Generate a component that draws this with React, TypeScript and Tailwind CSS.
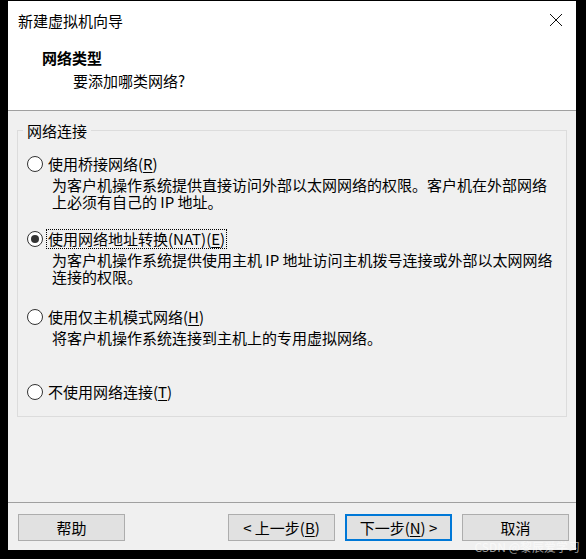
import React from 'react';

const font = "font-['Noto_Sans_CJK_SC','Noto_Sans',sans-serif]";

type Option = {
  id: string;
  label: React.ReactNode;
  desc?: string[];
  rowClass: string;
};

const U = ({ c }: { c: string }) => <span className="underline underline-offset-2">{c}</span>;

const options: Option[] = [
  {
    id: 'bridged',
    label: <>使用桥接网络(<U c="R" />)</>,
    desc: ['为客户机操作系统提供直接访问外部以太网网络的权限。客户机在外部网络', '上必须有自己的 IP 地址。'],
    rowClass: 'mt-[15px]',
  },
  {
    id: 'nat',
    label: <>使用网络地址转换(NAT)(<U c="E" />)</>,
    desc: ['为客户机操作系统提供使用主机 IP 地址访问主机拨号连接或外部以太网网络', '连接的权限。'],
    rowClass: 'mt-[19px]',
  },
  {
    id: 'hostonly',
    label: <>使用仅主机模式网络(<U c="H" />)</>,
    desc: ['将客户机操作系统连接到主机上的专用虚拟网络。'],
    rowClass: 'mt-[22px]',
  },
  {
    id: 'none',
    label: <>不使用网络连接(<U c="T" />)</>,
    rowClass: 'mt-[36px]',
  },
];

const Radio = ({ checked }: { checked: boolean }) => (
  <span className="flex h-[16px] w-[16px] shrink-0 items-center justify-center rounded-full border border-[#333333] bg-white">
    {checked && <span className="h-[8px] w-[8px] rounded-full bg-[#333333]" />}
  </span>
);

const Button = ({ children, primary }: { children: React.ReactNode; primary?: boolean }) => (
  <button
    className={
      primary
        ? 'flex h-[27px] w-[107px] items-center justify-center border-2 border-[#0078d7] bg-[#e1e1e1] text-[15px] leading-none text-black'
        : 'flex h-[27px] w-[107px] items-center justify-center border border-[#adadad] bg-[#e1e1e1] text-[15px] leading-none text-black'
    }
  >
    {children}
  </button>
);

export default function App() {
  const selected = 'nat';

  return (
    <div className={`relative h-[559px] w-[586px] bg-black pl-[8px] pt-[1px] ${font}`}>
      <div className="flex h-[549px] w-[568px] flex-col bg-[#f0f0f0] text-black">
        {/* Header */}
        <div className="relative h-[110px] border-b border-[#a0a0a0] bg-white">
          <div className="pl-[10px] pt-[10px] text-[15px] leading-[19px]">新建虚拟机向导</div>
          <svg
            className="absolute right-[13px] top-[12px]"
            width="14"
            height="14"
            viewBox="0 0 14 14"
            fill="none"
            stroke="#111"
            strokeWidth="1"
          >
            <path d="M1 1 L13 13 M13 1 L1 13" />
          </svg>
          <div className="pl-[34px] pt-[18px] text-[15px] font-bold leading-[19px]">网络类型</div>
          <div className="pl-[65px] pt-[4px] text-[15px] leading-[19px]">要添加哪类网络?</div>
        </div>

        {/* Body */}
        <div className="h-[391px] pl-[9px] pr-[10px] pt-[11px]">
          <fieldset className="w-[550px] border border-[#dcdcdc] pb-[14px] pl-[9px]">
            <legend className="-ml-[4px] px-[4px] text-[15px] leading-[17px]">网络连接</legend>
            {options.map((o) => (
              <div key={o.id} className={o.rowClass}>
                <div className="flex h-[20px] items-center gap-[3px]">
                  <Radio checked={o.id === selected} />
                  <span
                    className={
                      o.id === selected
                        ? 'border border-dotted border-black px-[1px] text-[15px] leading-[18px]'
                        : 'border border-transparent px-[1px] text-[15px] leading-[18px]'
                    }
                  >
                    {o.label}
                  </span>
                </div>
                {o.desc && (
                  <div className="ml-[25px] mt-[2px] text-[15px] leading-[17px]">
                    {o.desc.map((line) => (
                      <div key={line} className="whitespace-nowrap">
                        {line}
                      </div>
                    ))}
                  </div>
                )}
              </div>
            ))}
          </fieldset>
        </div>

        {/* Footer */}
        <div className="flex h-[48px] items-start border-t border-[#a0a0a0] pl-[10px] pt-[11px]">
          <Button>帮助</Button>
          <div className="ml-[103px] flex gap-[10px]">
            <Button>&lt; 上一步(<U c="B" />)</Button>
            <Button primary>
              下一步(<U c="N" />) &gt;
            </Button>
            <Button>取消</Button>
          </div>
        </div>
      </div>

      {/* watermark */}
      <div className="absolute bottom-[6px] right-[6px] text-[12px] leading-none text-white/60">CSDN @黎辰爱学习</div>
    </div>
  );
}
